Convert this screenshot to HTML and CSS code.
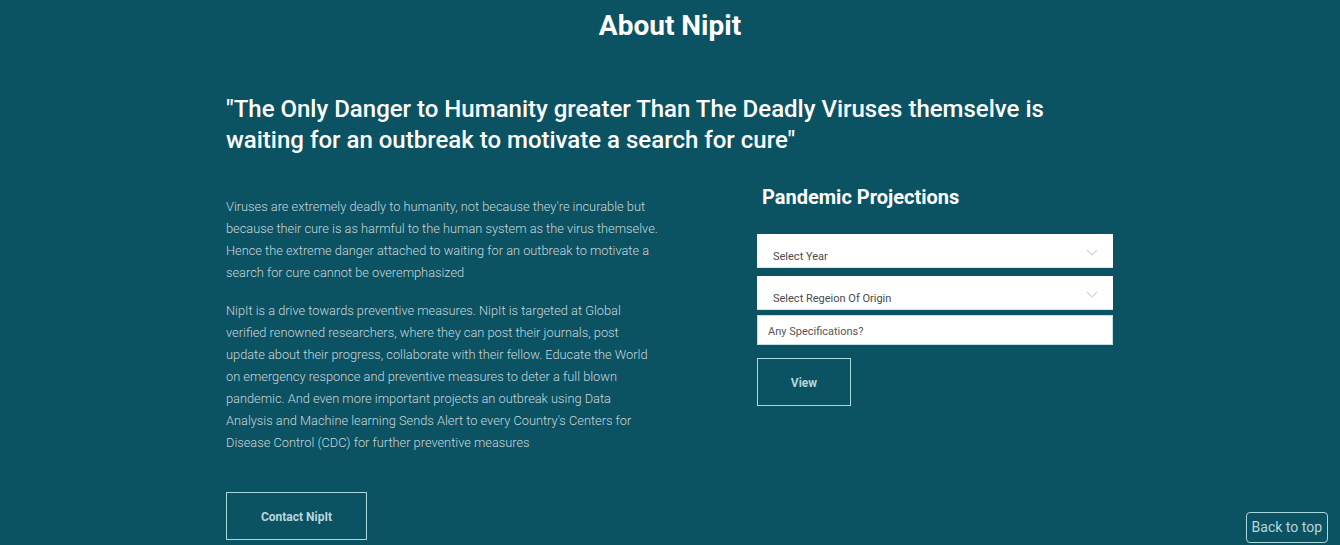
FILE: index.html
```html
<!DOCTYPE html>
<html>
<head>
<meta charset="utf-8">
<link rel="stylesheet" href="styles.css">
</head>
<body>
<section class="about">
  <h1 class="title">About Nipit</h1>
  <div class="container">
    <h2 class="quote">"The Only Danger to Humanity greater Than The Deadly Viruses themselve is waiting for an outbreak to motivate a search for cure"</h2>
    <div class="row">
      <div class="left">
        <p class="text">Viruses are extremely deadly to humanity, not because they're incurable but because their cure is as harmful to the human system as the virus themselve. Hence the extreme danger attached to waiting for an outbreak to motivate a search for cure cannot be overemphasized</p>
        <p class="text">NipIt is a drive towards preventive measures. NipIt is targeted at Global verified renowned researchers, where they can post their journals, post update about their progress, collaborate with their fellow. Educate the World on emergency responce and preventive measures to deter a full blown pandemic. And even more important projects an outbreak using Data Analysis and Machine learning Sends Alert to every Country's Centers for Disease Control (CDC) for further preventive measures</p>
        <button class="btn contact">Contact NipIt</button>
      </div>
      <div class="right">
        <h3 class="sub">Pandemic Projections</h3>
        <div class="select">
          <span>Select Year</span>
          <svg class="chev" width="12" height="7" viewBox="0 0 12 7"><path d="M1 1l5 5 5-5" fill="none" stroke="#d6d6d6" stroke-width="1.2"/></svg>
        </div>
        <div class="select">
          <span>Select Regeion Of Origin</span>
          <svg class="chev" width="12" height="7" viewBox="0 0 12 7"><path d="M1 1l5 5 5-5" fill="none" stroke="#d6d6d6" stroke-width="1.2"/></svg>
        </div>
        <div class="input">Any Specifications?</div>
        <button class="btn view">View</button>
      </div>
    </div>
  </div>
  <a class="top" href="#">Back to top</a>
</section>
</body>
</html>
```
FILE: styles.css
```css
html, body {
  margin: 0;
  padding: 0;
  background: #0b5263;
  height: 545px;
  overflow: hidden;
}
.about {
  font-family: Roboto, "Liberation Sans", sans-serif;
  color: #fff;
}
.title {
  margin: 0;
  padding-top: 8px;
  text-align: center;
  font-family: Roboto, sans-serif;
  font-weight: 700;
  font-size: 28px;
  line-height: 36px;
}
.container {
  margin-left: 226px;
  width: 888px;
}
.quote {
  margin: 50px 0 0;
  font-size: 24px;
  font-weight: 500;
  line-height: 31px;
  width: 850px;
}
.row {
  display: flex;
  gap: 65px;
}
.left {
  width: 466px;
  padding-top: 40px;
}
.text {
  margin: 0 0 16px;
  font-size: 12.8px;
  font-weight: 300;
  line-height: 22px;
  color: #c9d6da;
  width: 432px;
}
.btn {
  background: transparent;
  border: 1px solid #a9d8de;
  color: #b9d6db;
  font-family: Roboto, sans-serif;
  font-weight: 700;
  font-size: 12px;
  padding: 2px 0 0;
}
.contact {
  margin-top: 22px;
  width: 141px;
  height: 48px;
}
.right {
  width: 356px;
  padding-top: 28px;
}
.sub {
  margin: 0 0 0 5px;
  font-size: 20px;
  font-weight: 700;
  line-height: 26px;
}
.select {
  margin-top: 24px;
  height: 34px;
  background: #fff;
  border-bottom: 1px solid #dce6e8;
  box-sizing: border-box;
  display: flex;
  align-items: flex-end;
  justify-content: space-between;
  padding: 0 15px 4px 16px;
  color: #4a4a4a;
  font-size: 11px;
}
.select + .select {
  margin-top: 8px;
}
.chev {
  margin-bottom: 7px;
}
.input {
  margin-top: 5px;
  height: 30px;
  box-sizing: border-box;
  background: #fff;
  border: 1px solid #bfe0e6;
  padding: 9px 10px 0;
  font-size: 11px;
  color: #555;
}
.view {
  margin-top: 13px;
  width: 94px;
  height: 48px;
}
.top {
  position: absolute;
  right: 12px;
  top: 512px;
  border: 1px solid #a9d8de;
  border-radius: 4px;
  padding: 5px 5px;
  font-size: 14px;
  line-height: 19px;
  color: #b9d6db;
  text-decoration: none;
}
```
